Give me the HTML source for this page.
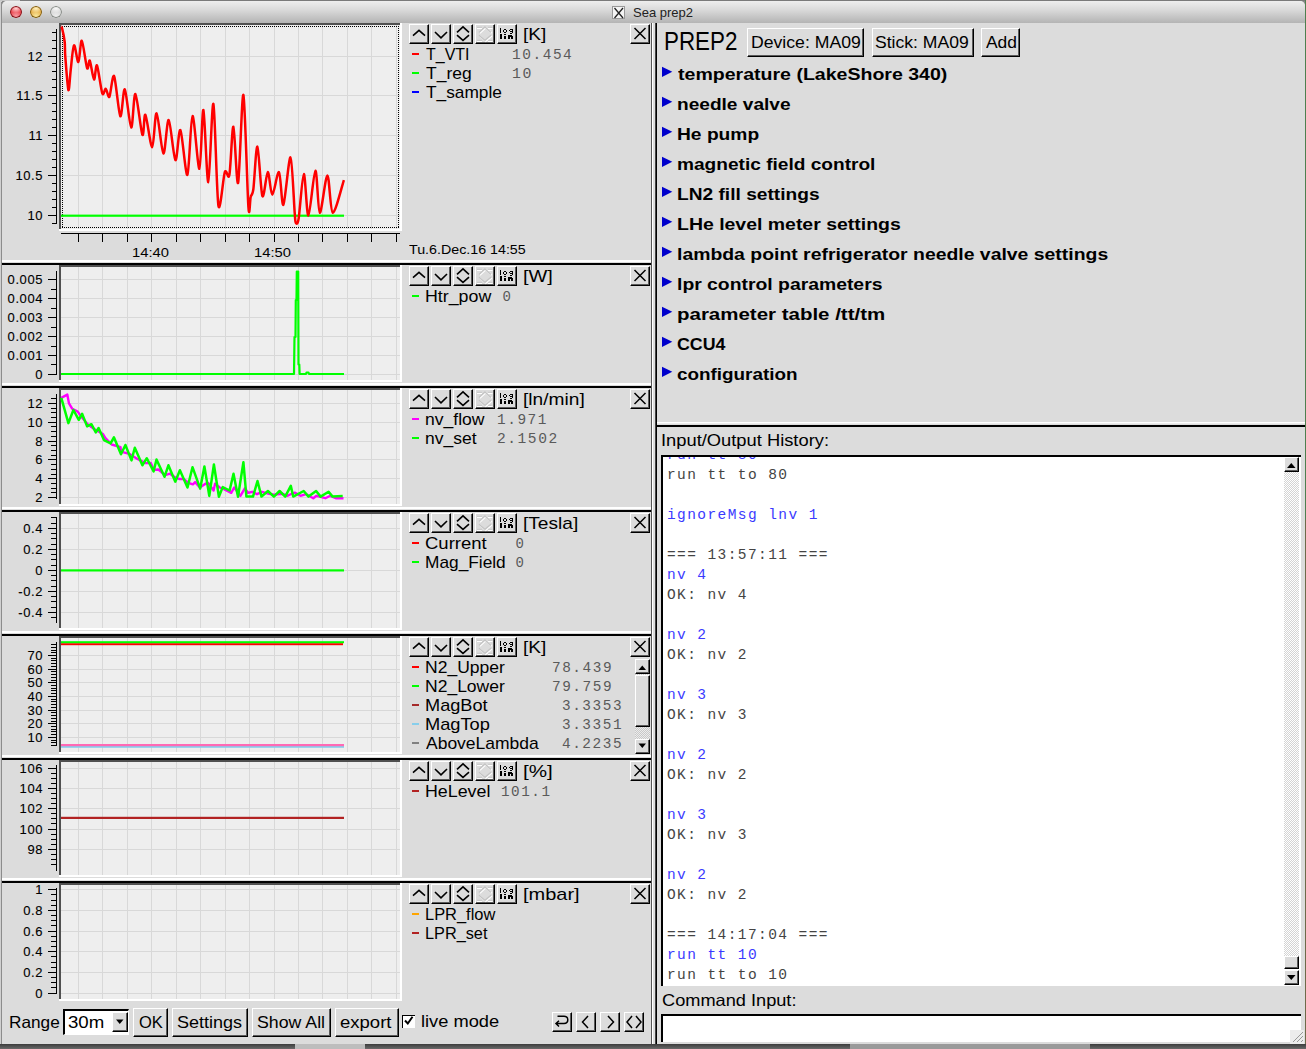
<!DOCTYPE html>
<html><head><meta charset="utf-8"><title>Sea prep2</title>
<style>
html,body{margin:0;padding:0;}
body{width:1306px;height:1049px;position:relative;overflow:hidden;background:#7a7a7a;font-family:"Liberation Sans",sans-serif;}
div{box-sizing:border-box;}
.btn{position:absolute;background:#dcdcdc;border-top:1px solid #fff;border-left:1px solid #fff;border-bottom:1px solid #000;border-right:1px solid #000;box-shadow:inset -1px -1px 0 #5a5a5a;}
svg{position:absolute;left:0;top:0;}
</style></head><body>

<div style="position:absolute;left:0px;top:0px;width:1306px;height:1049px;background:#8a8a8a;"></div>
<div style="position:absolute;left:0px;top:0px;width:1306px;height:1px;background:#7a7a7a;"></div>
<div style="position:absolute;left:0px;top:0px;width:2px;height:1044px;background:#d0d0d0;"></div>
<div style="position:absolute;left:1px;top:2px;width:1px;height:1042px;background:#8c8c8c;"></div>
<div style="position:absolute;left:0px;top:0px;width:20px;height:1px;background:#c8c8c8;"></div>
<div style="position:absolute;left:1305px;top:0px;width:1px;height:520px;background:#4f7f4f;"></div>
<div style="position:absolute;left:1305px;top:520px;width:1px;height:529px;background:#6f6a4a;"></div>
<div style="position:absolute;left:0px;top:1044px;width:1306px;height:5px;background:linear-gradient(#3c3c3c,#6a6a6a);"></div>
<div style="position:absolute;left:295px;top:1044px;width:70px;height:5px;background:#bdbdbd;"></div>
<div style="position:absolute;left:850px;top:1044px;width:240px;height:5px;background:#9a9a9a;"></div>
<div style="position:absolute;left:2px;top:1px;width:1303px;height:1043px;background:#dcdcdc;border-radius:5px 5px 0 0;"></div>
<div style="position:absolute;left:2px;top:23px;width:1303px;height:1021px;background:#dcdcdc;"></div>
<div style="position:absolute;left:2px;top:1px;width:1303px;height:22px;background:linear-gradient(#eeeeee,#dadada 40%,#b4b4b4);border-radius:5px 5px 0 0;"></div>
<div style="position:absolute;left:10.2px;top:5.9px;width:11.8px;height:11.8px;border-radius:50%;background:radial-gradient(ellipse 60% 35% at 50% 22%,#ffd6d6,transparent),radial-gradient(circle at 50% 85%,#f7a0a6,#e8303a 65%);box-shadow:inset 0 0 0 1px #7d1218;"></div>
<div style="position:absolute;left:30.0px;top:5.9px;width:11.8px;height:11.8px;border-radius:50%;background:radial-gradient(ellipse 60% 35% at 50% 22%,#fff2c0,transparent),radial-gradient(circle at 50% 85%,#faeaa0,#e2a43a 65%);box-shadow:inset 0 0 0 1px #7a5a10;"></div>
<div style="position:absolute;left:50.1px;top:5.9px;width:11.8px;height:11.8px;border-radius:50%;background:radial-gradient(ellipse 60% 35% at 50% 22%,#f8f8f8,transparent),radial-gradient(circle at 50% 85%,#eeeeee,#d2d2d2 65%);box-shadow:inset 0 0 0 1px #858a85;"></div>
<div style="position:absolute;left:612px;top:6px;width:13px;height:13px;background:#f4f4f4;border:1px solid #999;"></div>
<svg width="1306" height="30" style="position:absolute;left:0;top:0"><path d="M614.5 8 L623 18 M623 8 L614.5 18" stroke="#222" stroke-width="1.3"/></svg>
<div style="position:absolute;left:633.00px;top:5.50px;font-family:'Liberation Sans',sans-serif;font-size:13px;line-height:13px;color:#222;font-weight:normal;white-space:pre;">Sea prep2</div>
<svg width="1306" height="1049" style="position:absolute;left:0;top:0" shape-rendering="auto"><rect x="59" y="23" width="343" height="208" fill="#fff"/><rect x="59" y="23" width="341" height="206" fill="#505050"/><rect x="61" y="25" width="339" height="204" fill="#eeeeee"/><rect x="78" y="25" width="1" height="204" fill="#d8d8d8"/><rect x="102" y="25" width="1" height="204" fill="#d8d8d8"/><rect x="127" y="25" width="1" height="204" fill="#d8d8d8"/><rect x="151" y="25" width="1" height="204" fill="#d8d8d8"/><rect x="176" y="25" width="1" height="204" fill="#d8d8d8"/><rect x="200" y="25" width="1" height="204" fill="#d8d8d8"/><rect x="225" y="25" width="1" height="204" fill="#d8d8d8"/><rect x="249" y="25" width="1" height="204" fill="#d8d8d8"/><rect x="274" y="25" width="1" height="204" fill="#d8d8d8"/><rect x="298" y="25" width="1" height="204" fill="#d8d8d8"/><rect x="322" y="25" width="1" height="204" fill="#d8d8d8"/><rect x="347" y="25" width="1" height="204" fill="#d8d8d8"/><rect x="371" y="25" width="1" height="204" fill="#d8d8d8"/><rect x="396" y="25" width="1" height="204" fill="#d8d8d8"/><rect x="61" y="215" width="339" height="1" fill="#d8d8d8"/><rect x="61" y="175" width="339" height="1" fill="#d8d8d8"/><rect x="61" y="135" width="339" height="1" fill="#d8d8d8"/><rect x="61" y="95" width="339" height="1" fill="#d8d8d8"/><rect x="61" y="56" width="339" height="1" fill="#d8d8d8"/><rect x="56" y="29" width="1" height="195" fill="#000"/><rect x="52" y="223" width="5" height="1" fill="#000"/><rect x="48" y="215" width="9" height="1" fill="#000"/><rect x="52" y="207" width="5" height="1" fill="#000"/><rect x="52" y="199" width="5" height="1" fill="#000"/><rect x="52" y="191" width="5" height="1" fill="#000"/><rect x="52" y="183" width="5" height="1" fill="#000"/><rect x="48" y="175" width="9" height="1" fill="#000"/><rect x="52" y="167" width="5" height="1" fill="#000"/><rect x="52" y="159" width="5" height="1" fill="#000"/><rect x="52" y="151" width="5" height="1" fill="#000"/><rect x="52" y="143" width="5" height="1" fill="#000"/><rect x="48" y="135" width="9" height="1" fill="#000"/><rect x="52" y="127" width="5" height="1" fill="#000"/><rect x="52" y="119" width="5" height="1" fill="#000"/><rect x="52" y="111" width="5" height="1" fill="#000"/><rect x="52" y="103" width="5" height="1" fill="#000"/><rect x="48" y="95" width="9" height="1" fill="#000"/><rect x="52" y="87" width="5" height="1" fill="#000"/><rect x="52" y="79" width="5" height="1" fill="#000"/><rect x="52" y="71" width="5" height="1" fill="#000"/><rect x="52" y="63" width="5" height="1" fill="#000"/><rect x="48" y="56" width="9" height="1" fill="#000"/><rect x="52" y="48" width="5" height="1" fill="#000"/><rect x="52" y="40" width="5" height="1" fill="#000"/><rect x="52" y="32" width="5" height="1" fill="#000"/><rect x="59" y="265" width="343" height="117" fill="#fff"/><rect x="59" y="265" width="341" height="115" fill="#505050"/><rect x="61" y="267" width="339" height="113" fill="#eeeeee"/><rect x="78" y="267" width="1" height="113" fill="#d8d8d8"/><rect x="102" y="267" width="1" height="113" fill="#d8d8d8"/><rect x="127" y="267" width="1" height="113" fill="#d8d8d8"/><rect x="151" y="267" width="1" height="113" fill="#d8d8d8"/><rect x="176" y="267" width="1" height="113" fill="#d8d8d8"/><rect x="200" y="267" width="1" height="113" fill="#d8d8d8"/><rect x="225" y="267" width="1" height="113" fill="#d8d8d8"/><rect x="249" y="267" width="1" height="113" fill="#d8d8d8"/><rect x="274" y="267" width="1" height="113" fill="#d8d8d8"/><rect x="298" y="267" width="1" height="113" fill="#d8d8d8"/><rect x="322" y="267" width="1" height="113" fill="#d8d8d8"/><rect x="347" y="267" width="1" height="113" fill="#d8d8d8"/><rect x="371" y="267" width="1" height="113" fill="#d8d8d8"/><rect x="396" y="267" width="1" height="113" fill="#d8d8d8"/><rect x="61" y="374" width="339" height="1" fill="#d8d8d8"/><rect x="61" y="355" width="339" height="1" fill="#d8d8d8"/><rect x="61" y="336" width="339" height="1" fill="#d8d8d8"/><rect x="61" y="317" width="339" height="1" fill="#d8d8d8"/><rect x="61" y="298" width="339" height="1" fill="#d8d8d8"/><rect x="61" y="279" width="339" height="1" fill="#d8d8d8"/><rect x="56" y="271" width="1" height="104" fill="#000"/><rect x="48" y="374" width="9" height="1" fill="#000"/><rect x="51" y="364" width="6" height="1" fill="#000"/><rect x="48" y="355" width="9" height="1" fill="#000"/><rect x="51" y="346" width="6" height="1" fill="#000"/><rect x="48" y="336" width="9" height="1" fill="#000"/><rect x="51" y="327" width="6" height="1" fill="#000"/><rect x="48" y="317" width="9" height="1" fill="#000"/><rect x="51" y="308" width="6" height="1" fill="#000"/><rect x="48" y="298" width="9" height="1" fill="#000"/><rect x="51" y="289" width="6" height="1" fill="#000"/><rect x="48" y="279" width="9" height="1" fill="#000"/><rect x="59" y="388" width="343" height="118" fill="#fff"/><rect x="59" y="388" width="341" height="116" fill="#505050"/><rect x="61" y="390" width="339" height="114" fill="#eeeeee"/><rect x="78" y="390" width="1" height="114" fill="#d8d8d8"/><rect x="102" y="390" width="1" height="114" fill="#d8d8d8"/><rect x="127" y="390" width="1" height="114" fill="#d8d8d8"/><rect x="151" y="390" width="1" height="114" fill="#d8d8d8"/><rect x="176" y="390" width="1" height="114" fill="#d8d8d8"/><rect x="200" y="390" width="1" height="114" fill="#d8d8d8"/><rect x="225" y="390" width="1" height="114" fill="#d8d8d8"/><rect x="249" y="390" width="1" height="114" fill="#d8d8d8"/><rect x="274" y="390" width="1" height="114" fill="#d8d8d8"/><rect x="298" y="390" width="1" height="114" fill="#d8d8d8"/><rect x="322" y="390" width="1" height="114" fill="#d8d8d8"/><rect x="347" y="390" width="1" height="114" fill="#d8d8d8"/><rect x="371" y="390" width="1" height="114" fill="#d8d8d8"/><rect x="396" y="390" width="1" height="114" fill="#d8d8d8"/><rect x="61" y="497" width="339" height="1" fill="#d8d8d8"/><rect x="61" y="478" width="339" height="1" fill="#d8d8d8"/><rect x="61" y="459" width="339" height="1" fill="#d8d8d8"/><rect x="61" y="441" width="339" height="1" fill="#d8d8d8"/><rect x="61" y="422" width="339" height="1" fill="#d8d8d8"/><rect x="61" y="403" width="339" height="1" fill="#d8d8d8"/><rect x="56" y="394" width="1" height="105" fill="#000"/><rect x="48" y="497" width="9" height="1" fill="#000"/><rect x="51" y="492" width="6" height="1" fill="#000"/><rect x="51" y="488" width="6" height="1" fill="#000"/><rect x="51" y="483" width="6" height="1" fill="#000"/><rect x="48" y="478" width="9" height="1" fill="#000"/><rect x="51" y="474" width="6" height="1" fill="#000"/><rect x="51" y="469" width="6" height="1" fill="#000"/><rect x="51" y="464" width="6" height="1" fill="#000"/><rect x="48" y="459" width="9" height="1" fill="#000"/><rect x="51" y="455" width="6" height="1" fill="#000"/><rect x="51" y="450" width="6" height="1" fill="#000"/><rect x="51" y="445" width="6" height="1" fill="#000"/><rect x="48" y="441" width="9" height="1" fill="#000"/><rect x="51" y="436" width="6" height="1" fill="#000"/><rect x="51" y="431" width="6" height="1" fill="#000"/><rect x="51" y="426" width="6" height="1" fill="#000"/><rect x="48" y="422" width="9" height="1" fill="#000"/><rect x="51" y="417" width="6" height="1" fill="#000"/><rect x="51" y="412" width="6" height="1" fill="#000"/><rect x="51" y="408" width="6" height="1" fill="#000"/><rect x="48" y="403" width="9" height="1" fill="#000"/><rect x="51" y="398" width="6" height="1" fill="#000"/><rect x="59" y="512" width="343" height="118" fill="#fff"/><rect x="59" y="512" width="341" height="116" fill="#505050"/><rect x="61" y="514" width="339" height="114" fill="#eeeeee"/><rect x="78" y="514" width="1" height="114" fill="#d8d8d8"/><rect x="102" y="514" width="1" height="114" fill="#d8d8d8"/><rect x="127" y="514" width="1" height="114" fill="#d8d8d8"/><rect x="151" y="514" width="1" height="114" fill="#d8d8d8"/><rect x="176" y="514" width="1" height="114" fill="#d8d8d8"/><rect x="200" y="514" width="1" height="114" fill="#d8d8d8"/><rect x="225" y="514" width="1" height="114" fill="#d8d8d8"/><rect x="249" y="514" width="1" height="114" fill="#d8d8d8"/><rect x="274" y="514" width="1" height="114" fill="#d8d8d8"/><rect x="298" y="514" width="1" height="114" fill="#d8d8d8"/><rect x="322" y="514" width="1" height="114" fill="#d8d8d8"/><rect x="347" y="514" width="1" height="114" fill="#d8d8d8"/><rect x="371" y="514" width="1" height="114" fill="#d8d8d8"/><rect x="396" y="514" width="1" height="114" fill="#d8d8d8"/><rect x="61" y="612" width="339" height="1" fill="#d8d8d8"/><rect x="61" y="591" width="339" height="1" fill="#d8d8d8"/><rect x="61" y="570" width="339" height="1" fill="#d8d8d8"/><rect x="61" y="549" width="339" height="1" fill="#d8d8d8"/><rect x="61" y="528" width="339" height="1" fill="#d8d8d8"/><rect x="56" y="518" width="1" height="105" fill="#000"/><rect x="51" y="617" width="6" height="1" fill="#000"/><rect x="48" y="612" width="9" height="1" fill="#000"/><rect x="51" y="607" width="6" height="1" fill="#000"/><rect x="51" y="601" width="6" height="1" fill="#000"/><rect x="51" y="596" width="6" height="1" fill="#000"/><rect x="48" y="591" width="9" height="1" fill="#000"/><rect x="51" y="586" width="6" height="1" fill="#000"/><rect x="51" y="580" width="6" height="1" fill="#000"/><rect x="51" y="575" width="6" height="1" fill="#000"/><rect x="48" y="570" width="9" height="1" fill="#000"/><rect x="51" y="565" width="6" height="1" fill="#000"/><rect x="51" y="559" width="6" height="1" fill="#000"/><rect x="51" y="554" width="6" height="1" fill="#000"/><rect x="48" y="549" width="9" height="1" fill="#000"/><rect x="51" y="544" width="6" height="1" fill="#000"/><rect x="51" y="538" width="6" height="1" fill="#000"/><rect x="51" y="533" width="6" height="1" fill="#000"/><rect x="48" y="528" width="9" height="1" fill="#000"/><rect x="51" y="523" width="6" height="1" fill="#000"/><rect x="51" y="517" width="6" height="1" fill="#000"/><rect x="59" y="636" width="343" height="118" fill="#fff"/><rect x="59" y="636" width="341" height="116" fill="#505050"/><rect x="61" y="638" width="339" height="114" fill="#eeeeee"/><rect x="78" y="638" width="1" height="114" fill="#d8d8d8"/><rect x="102" y="638" width="1" height="114" fill="#d8d8d8"/><rect x="127" y="638" width="1" height="114" fill="#d8d8d8"/><rect x="151" y="638" width="1" height="114" fill="#d8d8d8"/><rect x="176" y="638" width="1" height="114" fill="#d8d8d8"/><rect x="200" y="638" width="1" height="114" fill="#d8d8d8"/><rect x="225" y="638" width="1" height="114" fill="#d8d8d8"/><rect x="249" y="638" width="1" height="114" fill="#d8d8d8"/><rect x="274" y="638" width="1" height="114" fill="#d8d8d8"/><rect x="298" y="638" width="1" height="114" fill="#d8d8d8"/><rect x="322" y="638" width="1" height="114" fill="#d8d8d8"/><rect x="347" y="638" width="1" height="114" fill="#d8d8d8"/><rect x="371" y="638" width="1" height="114" fill="#d8d8d8"/><rect x="396" y="638" width="1" height="114" fill="#d8d8d8"/><rect x="61" y="737" width="339" height="1" fill="#d8d8d8"/><rect x="61" y="723" width="339" height="1" fill="#d8d8d8"/><rect x="61" y="710" width="339" height="1" fill="#d8d8d8"/><rect x="61" y="696" width="339" height="1" fill="#d8d8d8"/><rect x="61" y="682" width="339" height="1" fill="#d8d8d8"/><rect x="61" y="669" width="339" height="1" fill="#d8d8d8"/><rect x="61" y="655" width="339" height="1" fill="#d8d8d8"/><rect x="56" y="642" width="1" height="104" fill="#000"/><rect x="51" y="745" width="6" height="1" fill="#000"/><rect x="51" y="742" width="6" height="1" fill="#000"/><rect x="51" y="740" width="6" height="1" fill="#000"/><rect x="48" y="737" width="9" height="1" fill="#000"/><rect x="51" y="734" width="6" height="1" fill="#000"/><rect x="51" y="731" width="6" height="1" fill="#000"/><rect x="51" y="729" width="6" height="1" fill="#000"/><rect x="51" y="726" width="6" height="1" fill="#000"/><rect x="48" y="723" width="9" height="1" fill="#000"/><rect x="51" y="721" width="6" height="1" fill="#000"/><rect x="51" y="718" width="6" height="1" fill="#000"/><rect x="51" y="715" width="6" height="1" fill="#000"/><rect x="51" y="712" width="6" height="1" fill="#000"/><rect x="48" y="710" width="9" height="1" fill="#000"/><rect x="51" y="707" width="6" height="1" fill="#000"/><rect x="51" y="704" width="6" height="1" fill="#000"/><rect x="51" y="701" width="6" height="1" fill="#000"/><rect x="51" y="699" width="6" height="1" fill="#000"/><rect x="48" y="696" width="9" height="1" fill="#000"/><rect x="51" y="693" width="6" height="1" fill="#000"/><rect x="51" y="690" width="6" height="1" fill="#000"/><rect x="51" y="688" width="6" height="1" fill="#000"/><rect x="51" y="685" width="6" height="1" fill="#000"/><rect x="48" y="682" width="9" height="1" fill="#000"/><rect x="51" y="680" width="6" height="1" fill="#000"/><rect x="51" y="677" width="6" height="1" fill="#000"/><rect x="51" y="674" width="6" height="1" fill="#000"/><rect x="51" y="671" width="6" height="1" fill="#000"/><rect x="48" y="669" width="9" height="1" fill="#000"/><rect x="51" y="666" width="6" height="1" fill="#000"/><rect x="51" y="663" width="6" height="1" fill="#000"/><rect x="51" y="660" width="6" height="1" fill="#000"/><rect x="51" y="658" width="6" height="1" fill="#000"/><rect x="48" y="655" width="9" height="1" fill="#000"/><rect x="51" y="652" width="6" height="1" fill="#000"/><rect x="51" y="650" width="6" height="1" fill="#000"/><rect x="51" y="647" width="6" height="1" fill="#000"/><rect x="51" y="644" width="6" height="1" fill="#000"/><rect x="59" y="760" width="343" height="117" fill="#fff"/><rect x="59" y="760" width="341" height="115" fill="#505050"/><rect x="61" y="762" width="339" height="113" fill="#eeeeee"/><rect x="78" y="762" width="1" height="113" fill="#d8d8d8"/><rect x="102" y="762" width="1" height="113" fill="#d8d8d8"/><rect x="127" y="762" width="1" height="113" fill="#d8d8d8"/><rect x="151" y="762" width="1" height="113" fill="#d8d8d8"/><rect x="176" y="762" width="1" height="113" fill="#d8d8d8"/><rect x="200" y="762" width="1" height="113" fill="#d8d8d8"/><rect x="225" y="762" width="1" height="113" fill="#d8d8d8"/><rect x="249" y="762" width="1" height="113" fill="#d8d8d8"/><rect x="274" y="762" width="1" height="113" fill="#d8d8d8"/><rect x="298" y="762" width="1" height="113" fill="#d8d8d8"/><rect x="322" y="762" width="1" height="113" fill="#d8d8d8"/><rect x="347" y="762" width="1" height="113" fill="#d8d8d8"/><rect x="371" y="762" width="1" height="113" fill="#d8d8d8"/><rect x="396" y="762" width="1" height="113" fill="#d8d8d8"/><rect x="61" y="849" width="339" height="1" fill="#d8d8d8"/><rect x="61" y="829" width="339" height="1" fill="#d8d8d8"/><rect x="61" y="808" width="339" height="1" fill="#d8d8d8"/><rect x="61" y="788" width="339" height="1" fill="#d8d8d8"/><rect x="61" y="768" width="339" height="1" fill="#d8d8d8"/><rect x="56" y="765" width="1" height="106" fill="#000"/><rect x="51" y="864" width="6" height="1" fill="#000"/><rect x="51" y="859" width="6" height="1" fill="#000"/><rect x="51" y="854" width="6" height="1" fill="#000"/><rect x="48" y="849" width="9" height="1" fill="#000"/><rect x="51" y="844" width="6" height="1" fill="#000"/><rect x="51" y="839" width="6" height="1" fill="#000"/><rect x="51" y="834" width="6" height="1" fill="#000"/><rect x="48" y="829" width="9" height="1" fill="#000"/><rect x="51" y="823" width="6" height="1" fill="#000"/><rect x="51" y="818" width="6" height="1" fill="#000"/><rect x="51" y="813" width="6" height="1" fill="#000"/><rect x="48" y="808" width="9" height="1" fill="#000"/><rect x="51" y="803" width="6" height="1" fill="#000"/><rect x="51" y="798" width="6" height="1" fill="#000"/><rect x="51" y="793" width="6" height="1" fill="#000"/><rect x="48" y="788" width="9" height="1" fill="#000"/><rect x="51" y="783" width="6" height="1" fill="#000"/><rect x="51" y="778" width="6" height="1" fill="#000"/><rect x="51" y="773" width="6" height="1" fill="#000"/><rect x="48" y="768" width="9" height="1" fill="#000"/><rect x="59" y="883" width="343" height="118" fill="#fff"/><rect x="59" y="883" width="341" height="116" fill="#505050"/><rect x="61" y="885" width="339" height="114" fill="#eeeeee"/><rect x="78" y="885" width="1" height="114" fill="#d8d8d8"/><rect x="102" y="885" width="1" height="114" fill="#d8d8d8"/><rect x="127" y="885" width="1" height="114" fill="#d8d8d8"/><rect x="151" y="885" width="1" height="114" fill="#d8d8d8"/><rect x="176" y="885" width="1" height="114" fill="#d8d8d8"/><rect x="200" y="885" width="1" height="114" fill="#d8d8d8"/><rect x="225" y="885" width="1" height="114" fill="#d8d8d8"/><rect x="249" y="885" width="1" height="114" fill="#d8d8d8"/><rect x="274" y="885" width="1" height="114" fill="#d8d8d8"/><rect x="298" y="885" width="1" height="114" fill="#d8d8d8"/><rect x="322" y="885" width="1" height="114" fill="#d8d8d8"/><rect x="347" y="885" width="1" height="114" fill="#d8d8d8"/><rect x="371" y="885" width="1" height="114" fill="#d8d8d8"/><rect x="396" y="885" width="1" height="114" fill="#d8d8d8"/><rect x="61" y="993" width="339" height="1" fill="#d8d8d8"/><rect x="61" y="972" width="339" height="1" fill="#d8d8d8"/><rect x="61" y="951" width="339" height="1" fill="#d8d8d8"/><rect x="61" y="931" width="339" height="1" fill="#d8d8d8"/><rect x="61" y="910" width="339" height="1" fill="#d8d8d8"/><rect x="61" y="889" width="339" height="1" fill="#d8d8d8"/><rect x="56" y="888" width="1" height="106" fill="#000"/><rect x="48" y="993" width="9" height="1" fill="#000"/><rect x="51" y="987" width="6" height="1" fill="#000"/><rect x="51" y="982" width="6" height="1" fill="#000"/><rect x="51" y="977" width="6" height="1" fill="#000"/><rect x="48" y="972" width="9" height="1" fill="#000"/><rect x="51" y="967" width="6" height="1" fill="#000"/><rect x="51" y="962" width="6" height="1" fill="#000"/><rect x="51" y="956" width="6" height="1" fill="#000"/><rect x="48" y="951" width="9" height="1" fill="#000"/><rect x="51" y="946" width="6" height="1" fill="#000"/><rect x="51" y="941" width="6" height="1" fill="#000"/><rect x="51" y="936" width="6" height="1" fill="#000"/><rect x="48" y="931" width="9" height="1" fill="#000"/><rect x="51" y="925" width="6" height="1" fill="#000"/><rect x="51" y="920" width="6" height="1" fill="#000"/><rect x="51" y="915" width="6" height="1" fill="#000"/><rect x="48" y="910" width="9" height="1" fill="#000"/><rect x="51" y="905" width="6" height="1" fill="#000"/><rect x="51" y="900" width="6" height="1" fill="#000"/><rect x="51" y="894" width="6" height="1" fill="#000"/><rect x="48" y="889" width="9" height="1" fill="#000"/><path d="M62 26.5 H399 M62 227.5 H399 M62.5 26 V228 M398.5 26 V228" fill="none" stroke="#000" stroke-width="1" stroke-dasharray="1,1" shape-rendering="crispEdges"/><rect x="61" y="233" width="339" height="1" fill="#000"/><rect x="78" y="233" width="1" height="9" fill="#000"/><rect x="102" y="233" width="1" height="9" fill="#000"/><rect x="127" y="233" width="1" height="9" fill="#000"/><rect x="151" y="233" width="1" height="9" fill="#000"/><rect x="176" y="233" width="1" height="9" fill="#000"/><rect x="200" y="233" width="1" height="9" fill="#000"/><rect x="225" y="233" width="1" height="9" fill="#000"/><rect x="249" y="233" width="1" height="9" fill="#000"/><rect x="274" y="233" width="1" height="9" fill="#000"/><rect x="298" y="233" width="1" height="9" fill="#000"/><rect x="322" y="233" width="1" height="9" fill="#000"/><rect x="347" y="233" width="1" height="9" fill="#000"/><rect x="371" y="233" width="1" height="9" fill="#000"/><rect x="396" y="233" width="1" height="9" fill="#000"/><rect x="61" y="214.60" width="283" height="2.2" fill="#00ff00"/><path d="M61.0,27.0 C61.1,27.1 61.4,25.8 62.0,28.0 C62.6,30.2 64.2,37.7 64.7,42.0 C65.2,46.3 64.7,49.5 65.3,56.7 C65.9,63.9 67.6,88.0 68.4,90.0 C69.2,92.0 69.9,76.7 70.7,70.0 C71.5,63.3 72.8,46.6 74.0,45.4 C75.2,44.2 77.2,62.7 78.4,62.0 C79.6,61.3 80.5,39.8 81.8,40.7 C83.1,41.6 85.9,65.1 87.1,68.1 C88.3,71.1 88.8,59.0 89.8,60.7 C90.8,62.4 92.9,78.7 94.0,79.4 C95.1,80.1 95.8,63.3 97.0,65.4 C98.2,67.5 101.0,89.9 102.3,93.4 C103.6,96.9 104.7,88.3 105.8,88.8 C106.9,89.3 108.2,98.7 109.4,96.8 C110.6,94.9 112.5,73.2 114.1,76.1 C115.7,79.0 118.7,114.1 120.3,116.1 C121.9,118.1 123.2,87.7 124.8,89.4 C126.4,91.1 129.6,126.8 131.2,127.5 C132.8,128.2 133.7,93.0 135.4,94.1 C137.1,95.2 140.9,131.7 142.4,134.8 C143.9,137.9 143.9,112.9 145.4,114.8 C146.9,116.7 150.5,147.4 152.2,147.2 C153.9,147.0 154.9,112.5 156.6,113.4 C158.3,114.3 161.6,152.4 163.4,153.4 C165.2,154.4 166.9,119.0 168.7,120.0 C170.5,121.0 173.6,158.6 175.4,160.1 C177.2,161.6 178.6,127.8 180.4,130.0 C182.2,132.2 185.6,176.9 187.4,174.8 C189.2,172.7 190.7,116.9 192.5,116.0 C194.3,115.1 197.8,169.7 199.4,168.8 C201.0,167.9 202.1,108.0 203.4,110.0 C204.7,112.0 206.8,183.0 208.3,182.1 C209.8,181.2 211.9,100.5 213.4,104.0 C214.9,107.5 216.7,195.3 218.4,205.5 C220.1,215.7 223.2,176.7 224.8,172.1 C226.5,167.5 228.1,181.6 229.4,174.8 C230.7,168.0 232.1,125.5 233.4,126.7 C234.7,127.9 236.6,187.6 238.1,182.8 C239.6,178.0 241.9,91.4 243.4,95.0 C244.9,98.6 247.3,191.5 248.4,206.8 C249.5,222.1 249.9,199.5 250.7,196.8 C251.4,194.1 252.4,196.3 253.4,188.8 C254.4,181.3 256.0,145.6 257.4,146.7 C258.8,147.8 260.8,192.3 262.4,196.1 C264.0,199.9 266.3,172.3 267.8,172.1 C269.3,171.9 270.6,194.8 272.3,194.8 C274.0,194.8 277.3,170.6 279.0,172.1 C280.7,173.6 281.7,207.0 283.4,204.8 C285.1,202.6 288.8,156.2 290.5,157.4 C292.2,158.6 293.9,203.0 294.7,212.8 C295.5,222.6 295.2,222.0 295.8,222.8 C296.4,223.6 297.5,225.5 298.7,218.2 C299.9,210.9 302.3,174.5 303.8,174.1 C305.3,173.7 306.7,216.0 308.4,215.5 C310.1,215.0 313.7,171.2 315.4,170.8 C317.1,170.4 318.0,212.1 319.8,212.8 C321.6,213.5 325.4,175.4 327.4,175.4 C329.3,175.4 330.3,212.1 332.8,212.8 C335.3,213.5 342.2,185.0 343.9,180.1" fill="none" stroke="#ff0000" stroke-width="2.5" stroke-linejoin="round"/><polyline points="61.0,374.0 294.0,374.0 294.5,337.0 295.5,337.0 295.8,300.0 296.5,300.0 296.8,271.5 298.2,271.5 298.5,364.5 299.3,364.5 299.6,374.0 306.0,374.0 306.5,372.5 308.5,372.5 309.0,374.0 344.0,374.0" fill="none" stroke="#00ff00" stroke-width="2.2" stroke-linejoin="round" stroke-linecap="butt"/><polyline points="61.3,397.9 67.3,394.6 69.0,403.4 72.3,408.8 77.7,411.6 81.6,417.0 87.6,424.2 95.3,429.7 103.0,434.0 105.2,437.9 111.7,444.5 120.5,447.2 121.0,451.6 129.3,453.8 137.0,458.7 145.7,463.1 150.8,463.0 153.8,469.9 158.4,469.5 165.3,475.2 169.9,473.7 175.3,477.5 179.1,479.0 183.7,479.0 188.3,482.9 192.9,484.4 195.2,482.1 199.8,487.5 205.1,484.0 208.2,482.9 213.6,490.5 215.1,483.6 219.7,487.5 223.5,489.0 231.2,492.8 234.2,487.5 240.4,495.9 245.0,488.2 248.0,492.8 252.2,491.8 257.0,494.2 261.9,491.8 269.1,493.8 273.9,494.6 282.8,493.8 287.6,495.8 291.6,493.8 294.8,492.6 300.5,495.8 306.1,494.2 313.3,498.2 316.5,495.8 325.4,498.2 330.2,495.8 335.8,498.2 343.5,498.2" fill="none" stroke="#ff00ff" stroke-width="2.4" stroke-linejoin="round" stroke-linecap="butt"/><polyline points="61.3,397.9 68.4,423.1 73.4,410.0 78.8,419.8 82.1,413.8 87.1,426.4 91.4,424.2 95.8,432.4 98.6,428.0 104.0,440.1 110.6,443.4 113.9,437.3 121.0,454.3 125.4,445.0 131.5,460.4 134.8,447.8 142.4,465.3 146.8,458.2 153.6,471.4 156.5,459.5 164.5,476.8 168.4,465.3 175.3,481.7 179.9,470.2 187.5,487.5 192.5,467.2 200.2,488.6 204.4,466.4 209.3,495.9 213.9,464.5 218.9,496.7 222.7,487.1 229.6,490.5 233.5,473.7 238.0,496.7 243.4,462.2 246.4,496.6 253.0,496.6 257.5,481.0 261.5,496.6 267.9,491.0 273.9,496.6 279.6,491.0 285.2,496.6 290.8,485.8 293.2,496.6 303.7,491.0 308.5,496.6 316.1,491.0 320.6,496.6 328.6,491.8 332.6,496.6 342.7,496.0" fill="none" stroke="#00ff00" stroke-width="2.5" stroke-linejoin="round" stroke-linecap="butt"/><rect x="61" y="569.30" width="283" height="2.2" fill="#00ff00"/><rect x="61" y="744.28" width="283" height="2" fill="#808080"/><rect x="61" y="746" width="283" height="1.8" fill="#87ceeb"/><rect x="61" y="744" width="283" height="2.2" fill="#ff69b4"/><rect x="61" y="643.2" width="282" height="2" fill="#ff0000"/><rect x="61" y="641.2" width="283" height="2" fill="#00ff00"/><rect x="61" y="816.79" width="283" height="2.2" fill="#b22222"/><rect x="2" y="260" width="649" height="2" fill="#fff"/><rect x="2" y="263" width="649" height="2" fill="#000"/><rect x="2" y="383" width="649" height="2" fill="#fff"/><rect x="2" y="386" width="649" height="2" fill="#000"/><rect x="2" y="507" width="649" height="2" fill="#fff"/><rect x="2" y="510" width="649" height="2" fill="#000"/><rect x="2" y="631" width="649" height="2" fill="#fff"/><rect x="2" y="634" width="649" height="2" fill="#000"/><rect x="2" y="755" width="649" height="2" fill="#fff"/><rect x="2" y="758" width="649" height="2" fill="#000"/><rect x="2" y="878" width="649" height="2" fill="#fff"/><rect x="2" y="881" width="649" height="2" fill="#000"/></svg>
<div style="position:absolute;left:0;width:43.1px;top:208.90px;text-align:right;font-size:13px;line-height:14px;letter-spacing:0.6px;-webkit-text-stroke:0.12px #000;white-space:pre;color:#000">10</div>
<div style="position:absolute;left:0;width:43.1px;top:168.90px;text-align:right;font-size:13px;line-height:14px;letter-spacing:0.6px;-webkit-text-stroke:0.12px #000;white-space:pre;color:#000">10.5</div>
<div style="position:absolute;left:0;width:43.1px;top:128.90px;text-align:right;font-size:13px;line-height:14px;letter-spacing:0.6px;-webkit-text-stroke:0.12px #000;white-space:pre;color:#000">11</div>
<div style="position:absolute;left:0;width:43.1px;top:88.90px;text-align:right;font-size:13px;line-height:14px;letter-spacing:0.6px;-webkit-text-stroke:0.12px #000;white-space:pre;color:#000">11.5</div>
<div style="position:absolute;left:0;width:43.1px;top:49.90px;text-align:right;font-size:13px;line-height:14px;letter-spacing:0.6px;-webkit-text-stroke:0.12px #000;white-space:pre;color:#000">12</div>
<div style="position:absolute;left:0;width:43.1px;top:367.90px;text-align:right;font-size:13px;line-height:14px;letter-spacing:0.6px;-webkit-text-stroke:0.12px #000;white-space:pre;color:#000">0</div>
<div style="position:absolute;left:0;width:43.1px;top:348.90px;text-align:right;font-size:13px;line-height:14px;letter-spacing:0.6px;-webkit-text-stroke:0.12px #000;white-space:pre;color:#000">0.001</div>
<div style="position:absolute;left:0;width:43.1px;top:329.90px;text-align:right;font-size:13px;line-height:14px;letter-spacing:0.6px;-webkit-text-stroke:0.12px #000;white-space:pre;color:#000">0.002</div>
<div style="position:absolute;left:0;width:43.1px;top:310.90px;text-align:right;font-size:13px;line-height:14px;letter-spacing:0.6px;-webkit-text-stroke:0.12px #000;white-space:pre;color:#000">0.003</div>
<div style="position:absolute;left:0;width:43.1px;top:291.90px;text-align:right;font-size:13px;line-height:14px;letter-spacing:0.6px;-webkit-text-stroke:0.12px #000;white-space:pre;color:#000">0.004</div>
<div style="position:absolute;left:0;width:43.1px;top:272.90px;text-align:right;font-size:13px;line-height:14px;letter-spacing:0.6px;-webkit-text-stroke:0.12px #000;white-space:pre;color:#000">0.005</div>
<div style="position:absolute;left:0;width:43.1px;top:490.90px;text-align:right;font-size:13px;line-height:14px;letter-spacing:0.6px;-webkit-text-stroke:0.12px #000;white-space:pre;color:#000">2</div>
<div style="position:absolute;left:0;width:43.1px;top:471.90px;text-align:right;font-size:13px;line-height:14px;letter-spacing:0.6px;-webkit-text-stroke:0.12px #000;white-space:pre;color:#000">4</div>
<div style="position:absolute;left:0;width:43.1px;top:452.90px;text-align:right;font-size:13px;line-height:14px;letter-spacing:0.6px;-webkit-text-stroke:0.12px #000;white-space:pre;color:#000">6</div>
<div style="position:absolute;left:0;width:43.1px;top:434.90px;text-align:right;font-size:13px;line-height:14px;letter-spacing:0.6px;-webkit-text-stroke:0.12px #000;white-space:pre;color:#000">8</div>
<div style="position:absolute;left:0;width:43.1px;top:415.90px;text-align:right;font-size:13px;line-height:14px;letter-spacing:0.6px;-webkit-text-stroke:0.12px #000;white-space:pre;color:#000">10</div>
<div style="position:absolute;left:0;width:43.1px;top:396.90px;text-align:right;font-size:13px;line-height:14px;letter-spacing:0.6px;-webkit-text-stroke:0.12px #000;white-space:pre;color:#000">12</div>
<div style="position:absolute;left:0;width:43.1px;top:605.90px;text-align:right;font-size:13px;line-height:14px;letter-spacing:0.6px;-webkit-text-stroke:0.12px #000;white-space:pre;color:#000">-0.4</div>
<div style="position:absolute;left:0;width:43.1px;top:584.90px;text-align:right;font-size:13px;line-height:14px;letter-spacing:0.6px;-webkit-text-stroke:0.12px #000;white-space:pre;color:#000">-0.2</div>
<div style="position:absolute;left:0;width:43.1px;top:563.90px;text-align:right;font-size:13px;line-height:14px;letter-spacing:0.6px;-webkit-text-stroke:0.12px #000;white-space:pre;color:#000">0</div>
<div style="position:absolute;left:0;width:43.1px;top:542.90px;text-align:right;font-size:13px;line-height:14px;letter-spacing:0.6px;-webkit-text-stroke:0.12px #000;white-space:pre;color:#000">0.2</div>
<div style="position:absolute;left:0;width:43.1px;top:521.90px;text-align:right;font-size:13px;line-height:14px;letter-spacing:0.6px;-webkit-text-stroke:0.12px #000;white-space:pre;color:#000">0.4</div>
<div style="position:absolute;left:0;width:43.1px;top:730.90px;text-align:right;font-size:13px;line-height:14px;letter-spacing:0.6px;-webkit-text-stroke:0.12px #000;white-space:pre;color:#000">10</div>
<div style="position:absolute;left:0;width:43.1px;top:716.90px;text-align:right;font-size:13px;line-height:14px;letter-spacing:0.6px;-webkit-text-stroke:0.12px #000;white-space:pre;color:#000">20</div>
<div style="position:absolute;left:0;width:43.1px;top:703.90px;text-align:right;font-size:13px;line-height:14px;letter-spacing:0.6px;-webkit-text-stroke:0.12px #000;white-space:pre;color:#000">30</div>
<div style="position:absolute;left:0;width:43.1px;top:689.90px;text-align:right;font-size:13px;line-height:14px;letter-spacing:0.6px;-webkit-text-stroke:0.12px #000;white-space:pre;color:#000">40</div>
<div style="position:absolute;left:0;width:43.1px;top:675.90px;text-align:right;font-size:13px;line-height:14px;letter-spacing:0.6px;-webkit-text-stroke:0.12px #000;white-space:pre;color:#000">50</div>
<div style="position:absolute;left:0;width:43.1px;top:662.90px;text-align:right;font-size:13px;line-height:14px;letter-spacing:0.6px;-webkit-text-stroke:0.12px #000;white-space:pre;color:#000">60</div>
<div style="position:absolute;left:0;width:43.1px;top:648.90px;text-align:right;font-size:13px;line-height:14px;letter-spacing:0.6px;-webkit-text-stroke:0.12px #000;white-space:pre;color:#000">70</div>
<div style="position:absolute;left:0;width:43.1px;top:842.90px;text-align:right;font-size:13px;line-height:14px;letter-spacing:0.6px;-webkit-text-stroke:0.12px #000;white-space:pre;color:#000">98</div>
<div style="position:absolute;left:0;width:43.1px;top:822.90px;text-align:right;font-size:13px;line-height:14px;letter-spacing:0.6px;-webkit-text-stroke:0.12px #000;white-space:pre;color:#000">100</div>
<div style="position:absolute;left:0;width:43.1px;top:801.90px;text-align:right;font-size:13px;line-height:14px;letter-spacing:0.6px;-webkit-text-stroke:0.12px #000;white-space:pre;color:#000">102</div>
<div style="position:absolute;left:0;width:43.1px;top:781.90px;text-align:right;font-size:13px;line-height:14px;letter-spacing:0.6px;-webkit-text-stroke:0.12px #000;white-space:pre;color:#000">104</div>
<div style="position:absolute;left:0;width:43.1px;top:761.90px;text-align:right;font-size:13px;line-height:14px;letter-spacing:0.6px;-webkit-text-stroke:0.12px #000;white-space:pre;color:#000">106</div>
<div style="position:absolute;left:0;width:43.1px;top:986.90px;text-align:right;font-size:13px;line-height:14px;letter-spacing:0.6px;-webkit-text-stroke:0.12px #000;white-space:pre;color:#000">0</div>
<div style="position:absolute;left:0;width:43.1px;top:965.90px;text-align:right;font-size:13px;line-height:14px;letter-spacing:0.6px;-webkit-text-stroke:0.12px #000;white-space:pre;color:#000">0.2</div>
<div style="position:absolute;left:0;width:43.1px;top:944.90px;text-align:right;font-size:13px;line-height:14px;letter-spacing:0.6px;-webkit-text-stroke:0.12px #000;white-space:pre;color:#000">0.4</div>
<div style="position:absolute;left:0;width:43.1px;top:924.90px;text-align:right;font-size:13px;line-height:14px;letter-spacing:0.6px;-webkit-text-stroke:0.12px #000;white-space:pre;color:#000">0.6</div>
<div style="position:absolute;left:0;width:43.1px;top:903.90px;text-align:right;font-size:13px;line-height:14px;letter-spacing:0.6px;-webkit-text-stroke:0.12px #000;white-space:pre;color:#000">0.8</div>
<div style="position:absolute;left:0;width:43.1px;top:882.90px;text-align:right;font-size:13px;line-height:14px;letter-spacing:0.6px;-webkit-text-stroke:0.12px #000;white-space:pre;color:#000">1</div>
<div style="position:absolute;left:132.36px;top:245.80px;font-family:'Liberation Sans',sans-serif;font-size:13px;line-height:13px;color:#000;font-weight:normal;white-space:pre;transform:scaleX(1.1355);transform-origin:0 0;">14:40</div>
<div style="position:absolute;left:254.36px;top:245.80px;font-family:'Liberation Sans',sans-serif;font-size:13px;line-height:13px;color:#000;font-weight:normal;white-space:pre;transform:scaleX(1.1355);transform-origin:0 0;">14:50</div>
<div style="position:absolute;left:409.30px;top:243.30px;font-family:'Liberation Sans',sans-serif;font-size:13px;line-height:13px;color:#000;font-weight:normal;white-space:pre;transform:scaleX(1.0962);transform-origin:0 0;">Tu.6.Dec.16 14:55</div>
<div class="btn" style="left:409px;top:24px;width:20px;height:20px"></div>
<div class="btn" style="left:431px;top:24px;width:20px;height:20px"></div>
<div class="btn" style="left:453px;top:24px;width:20px;height:20px"></div>
<div class="btn" style="left:475px;top:24px;width:20px;height:20px"></div>
<div class="btn" style="left:497px;top:24px;width:20px;height:20px"></div>
<div class="btn" style="left:630px;top:24px;width:20px;height:20px"></div>
<div style="position:absolute;left:523.38px;top:26.11px;font-family:'Liberation Sans',sans-serif;font-size:17px;line-height:17px;color:#000;font-weight:normal;white-space:pre;transform:scaleX(1.1211);transform-origin:0 0;">[K]</div>
<div style="position:absolute;left:412px;top:53px;width:7px;height:2px;background:#ff0000;"></div>
<div style="position:absolute;left:425.80px;top:45.61px;font-family:'Liberation Sans',sans-serif;font-size:17px;line-height:17px;color:#000;font-weight:normal;white-space:pre;transform:scaleX(0.9400);transform-origin:0 0;">T_VTI</div>
<div style="position:absolute;left:512.47px;top:47.97px;font-family:'Liberation Mono',sans-serif;font-size:14px;line-height:14px;color:#5a5a5a;font-weight:normal;white-space:pre;transform:scaleX(1.0321);transform-origin:0 0;letter-spacing:1.5px;">10.454</div>
<div style="position:absolute;left:412px;top:72px;width:7px;height:2px;background:#00ff00;"></div>
<div style="position:absolute;left:425.80px;top:64.61px;font-family:'Liberation Sans',sans-serif;font-size:17px;line-height:17px;color:#000;font-weight:normal;white-space:pre;transform:scaleX(1.0279);transform-origin:0 0;">T_reg</div>
<div style="position:absolute;left:512.44px;top:66.97px;font-family:'Liberation Mono',sans-serif;font-size:14px;line-height:14px;color:#5a5a5a;font-weight:normal;white-space:pre;transform:scaleX(1.0588);transform-origin:0 0;letter-spacing:1.5px;">10</div>
<div style="position:absolute;left:412px;top:91px;width:7px;height:2px;background:#0000ff;"></div>
<div style="position:absolute;left:425.80px;top:83.61px;font-family:'Liberation Sans',sans-serif;font-size:17px;line-height:17px;color:#000;font-weight:normal;white-space:pre;transform:scaleX(1.0162);transform-origin:0 0;">T_sample</div>
<div class="btn" style="left:409px;top:266px;width:20px;height:20px"></div>
<div class="btn" style="left:431px;top:266px;width:20px;height:20px"></div>
<div class="btn" style="left:453px;top:266px;width:20px;height:20px"></div>
<div class="btn" style="left:475px;top:266px;width:20px;height:20px"></div>
<div class="btn" style="left:497px;top:266px;width:20px;height:20px"></div>
<div class="btn" style="left:630px;top:266px;width:20px;height:20px"></div>
<div style="position:absolute;left:523.33px;top:268.11px;font-family:'Liberation Sans',sans-serif;font-size:17px;line-height:17px;color:#000;font-weight:normal;white-space:pre;transform:scaleX(1.1696);transform-origin:0 0;">[W]</div>
<div style="position:absolute;left:412px;top:295px;width:7px;height:2px;background:#00ff00;"></div>
<div style="position:absolute;left:424.75px;top:287.61px;font-family:'Liberation Sans',sans-serif;font-size:17px;line-height:17px;color:#000;font-weight:normal;white-space:pre;transform:scaleX(1.0468);transform-origin:0 0;">Htr_pow</div>
<div style="position:absolute;left:502.50px;top:289.97px;font-family:'Liberation Mono',sans-serif;font-size:14px;line-height:14px;color:#5a5a5a;font-weight:normal;white-space:pre;letter-spacing:1.5px;">0</div>
<div class="btn" style="left:409px;top:389px;width:20px;height:20px"></div>
<div class="btn" style="left:431px;top:389px;width:20px;height:20px"></div>
<div class="btn" style="left:453px;top:389px;width:20px;height:20px"></div>
<div class="btn" style="left:475px;top:389px;width:20px;height:20px"></div>
<div class="btn" style="left:497px;top:389px;width:20px;height:20px"></div>
<div class="btn" style="left:630px;top:389px;width:20px;height:20px"></div>
<div style="position:absolute;left:523.37px;top:391.11px;font-family:'Liberation Sans',sans-serif;font-size:17px;line-height:17px;color:#000;font-weight:normal;white-space:pre;transform:scaleX(1.1264);transform-origin:0 0;">[ln/min]</div>
<div style="position:absolute;left:412px;top:418px;width:7px;height:2px;background:#ff00ff;"></div>
<div style="position:absolute;left:424.77px;top:410.61px;font-family:'Liberation Sans',sans-serif;font-size:17px;line-height:17px;color:#000;font-weight:normal;white-space:pre;transform:scaleX(1.0333);transform-origin:0 0;">nv_flow</div>
<div style="position:absolute;left:496.57px;top:412.97px;font-family:'Liberation Mono',sans-serif;font-size:14px;line-height:14px;color:#5a5a5a;font-weight:normal;white-space:pre;transform:scaleX(1.0304);transform-origin:0 0;letter-spacing:1.5px;">1.971</div>
<div style="position:absolute;left:412px;top:437px;width:7px;height:2px;background:#00ff00;"></div>
<div style="position:absolute;left:424.77px;top:429.61px;font-family:'Liberation Sans',sans-serif;font-size:17px;line-height:17px;color:#000;font-weight:normal;white-space:pre;transform:scaleX(1.0286);transform-origin:0 0;">nv_set</div>
<div style="position:absolute;left:496.56px;top:431.97px;font-family:'Liberation Mono',sans-serif;font-size:14px;line-height:14px;color:#5a5a5a;font-weight:normal;white-space:pre;transform:scaleX(1.0393);transform-origin:0 0;letter-spacing:1.5px;">2.1502</div>
<div class="btn" style="left:409px;top:513px;width:20px;height:20px"></div>
<div class="btn" style="left:431px;top:513px;width:20px;height:20px"></div>
<div class="btn" style="left:453px;top:513px;width:20px;height:20px"></div>
<div class="btn" style="left:475px;top:513px;width:20px;height:20px"></div>
<div class="btn" style="left:497px;top:513px;width:20px;height:20px"></div>
<div class="btn" style="left:630px;top:513px;width:20px;height:20px"></div>
<div style="position:absolute;left:523.38px;top:515.11px;font-family:'Liberation Sans',sans-serif;font-size:17px;line-height:17px;color:#000;font-weight:normal;white-space:pre;transform:scaleX(1.1234);transform-origin:0 0;">[Tesla]</div>
<div style="position:absolute;left:412px;top:542px;width:7px;height:2px;background:#ff0000;"></div>
<div style="position:absolute;left:424.71px;top:534.61px;font-family:'Liberation Sans',sans-serif;font-size:17px;line-height:17px;color:#000;font-weight:normal;white-space:pre;transform:scaleX(1.0875);transform-origin:0 0;">Current</div>
<div style="position:absolute;left:515.50px;top:536.97px;font-family:'Liberation Mono',sans-serif;font-size:14px;line-height:14px;color:#5a5a5a;font-weight:normal;white-space:pre;letter-spacing:1.5px;">0</div>
<div style="position:absolute;left:412px;top:561px;width:7px;height:2px;background:#00ff00;"></div>
<div style="position:absolute;left:424.78px;top:553.61px;font-family:'Liberation Sans',sans-serif;font-size:17px;line-height:17px;color:#000;font-weight:normal;white-space:pre;transform:scaleX(1.0169);transform-origin:0 0;">Mag_Field</div>
<div style="position:absolute;left:515.50px;top:555.97px;font-family:'Liberation Mono',sans-serif;font-size:14px;line-height:14px;color:#5a5a5a;font-weight:normal;white-space:pre;letter-spacing:1.5px;">0</div>
<div class="btn" style="left:409px;top:637px;width:20px;height:20px"></div>
<div class="btn" style="left:431px;top:637px;width:20px;height:20px"></div>
<div class="btn" style="left:453px;top:637px;width:20px;height:20px"></div>
<div class="btn" style="left:475px;top:637px;width:20px;height:20px"></div>
<div class="btn" style="left:497px;top:637px;width:20px;height:20px"></div>
<div class="btn" style="left:630px;top:637px;width:20px;height:20px"></div>
<div style="position:absolute;left:523.38px;top:639.11px;font-family:'Liberation Sans',sans-serif;font-size:17px;line-height:17px;color:#000;font-weight:normal;white-space:pre;transform:scaleX(1.1211);transform-origin:0 0;">[K]</div>
<div style="position:absolute;left:412px;top:666px;width:7px;height:2px;background:#ff0000;"></div>
<div style="position:absolute;left:424.77px;top:658.61px;font-family:'Liberation Sans',sans-serif;font-size:17px;line-height:17px;color:#000;font-weight:normal;white-space:pre;transform:scaleX(1.0303);transform-origin:0 0;">N2_Upper</div>
<div style="position:absolute;left:552.37px;top:660.97px;font-family:'Liberation Mono',sans-serif;font-size:14px;line-height:14px;color:#5a5a5a;font-weight:normal;white-space:pre;transform:scaleX(1.0286);transform-origin:0 0;letter-spacing:1.5px;">78.439</div>
<div style="position:absolute;left:412px;top:685px;width:7px;height:2px;background:#00ff00;"></div>
<div style="position:absolute;left:424.77px;top:677.61px;font-family:'Liberation Sans',sans-serif;font-size:17px;line-height:17px;color:#000;font-weight:normal;white-space:pre;transform:scaleX(1.0303);transform-origin:0 0;">N2_Lower</div>
<div style="position:absolute;left:552.37px;top:679.97px;font-family:'Liberation Mono',sans-serif;font-size:14px;line-height:14px;color:#5a5a5a;font-weight:normal;white-space:pre;transform:scaleX(1.0286);transform-origin:0 0;letter-spacing:1.5px;">79.759</div>
<div style="position:absolute;left:412px;top:704px;width:7px;height:2px;background:#a52a2a;"></div>
<div style="position:absolute;left:424.73px;top:696.61px;font-family:'Liberation Sans',sans-serif;font-size:17px;line-height:17px;color:#000;font-weight:normal;white-space:pre;transform:scaleX(1.0684);transform-origin:0 0;">MagBot</div>
<div style="position:absolute;left:562.37px;top:698.97px;font-family:'Liberation Mono',sans-serif;font-size:14px;line-height:14px;color:#5a5a5a;font-weight:normal;white-space:pre;transform:scaleX(1.0286);transform-origin:0 0;letter-spacing:1.5px;">3.3353</div>
<div style="position:absolute;left:412px;top:723px;width:7px;height:2px;background:#87ceeb;"></div>
<div style="position:absolute;left:424.73px;top:715.61px;font-family:'Liberation Sans',sans-serif;font-size:17px;line-height:17px;color:#000;font-weight:normal;white-space:pre;transform:scaleX(1.0729);transform-origin:0 0;">MagTop</div>
<div style="position:absolute;left:562.37px;top:717.97px;font-family:'Liberation Mono',sans-serif;font-size:14px;line-height:14px;color:#5a5a5a;font-weight:normal;white-space:pre;transform:scaleX(1.0286);transform-origin:0 0;letter-spacing:1.5px;">3.3351</div>
<div style="position:absolute;left:412px;top:742px;width:7px;height:2px;background:#808080;"></div>
<div style="position:absolute;left:425.80px;top:734.61px;font-family:'Liberation Sans',sans-serif;font-size:17px;line-height:17px;color:#000;font-weight:normal;white-space:pre;transform:scaleX(1.0282);transform-origin:0 0;">AboveLambda</div>
<div style="position:absolute;left:562.37px;top:736.97px;font-family:'Liberation Mono',sans-serif;font-size:14px;line-height:14px;color:#5a5a5a;font-weight:normal;white-space:pre;transform:scaleX(1.0286);transform-origin:0 0;letter-spacing:1.5px;">4.2235</div>
<div class="btn" style="left:409px;top:761px;width:20px;height:20px"></div>
<div class="btn" style="left:431px;top:761px;width:20px;height:20px"></div>
<div class="btn" style="left:453px;top:761px;width:20px;height:20px"></div>
<div class="btn" style="left:475px;top:761px;width:20px;height:20px"></div>
<div class="btn" style="left:497px;top:761px;width:20px;height:20px"></div>
<div class="btn" style="left:630px;top:761px;width:20px;height:20px"></div>
<div style="position:absolute;left:523.29px;top:763.11px;font-family:'Liberation Sans',sans-serif;font-size:17px;line-height:17px;color:#000;font-weight:normal;white-space:pre;transform:scaleX(1.2136);transform-origin:0 0;">[%]</div>
<div style="position:absolute;left:412px;top:790px;width:7px;height:2px;background:#b22222;"></div>
<div style="position:absolute;left:424.75px;top:782.61px;font-family:'Liberation Sans',sans-serif;font-size:17px;line-height:17px;color:#000;font-weight:normal;white-space:pre;transform:scaleX(1.0483);transform-origin:0 0;">HeLevel</div>
<div style="position:absolute;left:500.98px;top:784.97px;font-family:'Liberation Mono',sans-serif;font-size:14px;line-height:14px;color:#5a5a5a;font-weight:normal;white-space:pre;transform:scaleX(1.0217);transform-origin:0 0;letter-spacing:1.5px;">101.1</div>
<div class="btn" style="left:409px;top:884px;width:20px;height:20px"></div>
<div class="btn" style="left:431px;top:884px;width:20px;height:20px"></div>
<div class="btn" style="left:453px;top:884px;width:20px;height:20px"></div>
<div class="btn" style="left:475px;top:884px;width:20px;height:20px"></div>
<div class="btn" style="left:497px;top:884px;width:20px;height:20px"></div>
<div class="btn" style="left:630px;top:884px;width:20px;height:20px"></div>
<div style="position:absolute;left:523.32px;top:886.11px;font-family:'Liberation Sans',sans-serif;font-size:17px;line-height:17px;color:#000;font-weight:normal;white-space:pre;transform:scaleX(1.1761);transform-origin:0 0;">[mbar]</div>
<div style="position:absolute;left:412px;top:913px;width:7px;height:2px;background:#ffa500;"></div>
<div style="position:absolute;left:424.83px;top:905.61px;font-family:'Liberation Sans',sans-serif;font-size:17px;line-height:17px;color:#000;font-weight:normal;white-space:pre;transform:scaleX(0.9667);transform-origin:0 0;">LPR_flow</div>
<div style="position:absolute;left:412px;top:932px;width:7px;height:2px;background:#b22222;"></div>
<div style="position:absolute;left:424.84px;top:924.61px;font-family:'Liberation Sans',sans-serif;font-size:17px;line-height:17px;color:#000;font-weight:normal;white-space:pre;transform:scaleX(0.9578);transform-origin:0 0;">LPR_set</div>
<div style="position:absolute;left:635px;top:659px;width:15px;height:95px;background:repeating-conic-gradient(#c8c8c8 0 25%,#ececec 0 50%) 0 0/2px 2px;"></div>
<div class="btn" style="left:635px;top:659px;width:15px;height:15px"></div>
<div class="btn" style="left:635px;top:675px;width:15px;height:52px"></div>
<div class="btn" style="left:635px;top:739px;width:15px;height:15px"></div>
<div style="position:absolute;left:8.86px;top:1013.63px;font-family:'Liberation Sans',sans-serif;font-size:16.5px;line-height:16.5px;color:#000;font-weight:normal;white-space:pre;transform:scaleX(1.0426);transform-origin:0 0;">Range</div>
<div style="position:absolute;left:63px;top:1009px;width:66px;height:26px;background:#fff;border-top:2px solid #000;border-left:2px solid #000;border-bottom:1px solid #fff;border-right:1px solid #fff;"></div>
<div style="position:absolute;left:67.67px;top:1013.63px;font-family:'Liberation Sans',sans-serif;font-size:16.5px;line-height:16.5px;color:#000;font-weight:normal;white-space:pre;transform:scaleX(1.1300);transform-origin:0 0;">30m</div>
<div class="btn" style="left:112px;top:1012px;width:16px;height:20px"></div>
<div class="btn" style="left:133px;top:1008px;width:35px;height:29px"></div>
<div style="position:absolute;left:138.90px;top:1013.63px;font-family:'Liberation Sans',sans-serif;font-size:16.5px;line-height:16.5px;color:#000;font-weight:normal;white-space:pre;">OK</div>
<div class="btn" style="left:172px;top:1008px;width:76px;height:29px"></div>
<div style="position:absolute;left:177.41px;top:1013.63px;font-family:'Liberation Sans',sans-serif;font-size:16.5px;line-height:16.5px;color:#000;font-weight:normal;white-space:pre;transform:scaleX(1.0914);transform-origin:0 0;">Settings</div>
<div class="btn" style="left:252px;top:1008px;width:79px;height:29px"></div>
<div style="position:absolute;left:257.22px;top:1013.63px;font-family:'Liberation Sans',sans-serif;font-size:16.5px;line-height:16.5px;color:#000;font-weight:normal;white-space:pre;transform:scaleX(1.0754);transform-origin:0 0;">Show All</div>
<div class="btn" style="left:335px;top:1008px;width:64px;height:29px"></div>
<div style="position:absolute;left:340.38px;top:1013.63px;font-family:'Liberation Sans',sans-serif;font-size:16.5px;line-height:16.5px;color:#000;font-weight:normal;white-space:pre;transform:scaleX(1.1222);transform-origin:0 0;">export</div>
<div style="position:absolute;left:402px;top:1015px;width:13px;height:13px;background:#fff;border-top:1.5px solid #000;border-left:1.5px solid #000;"></div>
<div style="position:absolute;left:420.69px;top:1013.03px;font-family:'Liberation Sans',sans-serif;font-size:16.5px;line-height:16.5px;color:#000;font-weight:normal;white-space:pre;transform:scaleX(1.1072);transform-origin:0 0;">live mode</div>
<div class="btn" style="left:552px;top:1012px;width:20px;height:20px"></div>
<div class="btn" style="left:576px;top:1012px;width:20px;height:20px"></div>
<div class="btn" style="left:600px;top:1012px;width:20px;height:20px"></div>
<div class="btn" style="left:624px;top:1012px;width:20px;height:20px"></div>
<div style="position:absolute;left:651px;top:23px;width:1px;height:1021px;background:#555;"></div>
<div style="position:absolute;left:652px;top:23px;width:1px;height:1021px;background:#fff;"></div>
<div style="position:absolute;left:655px;top:23px;width:1px;height:1021px;background:#444;"></div>
<div style="position:absolute;left:656px;top:23px;width:1px;height:1021px;background:#000;"></div>
<div style="position:absolute;left:664.04px;top:28.81px;font-family:'Liberation Sans',sans-serif;font-size:25.5px;line-height:25.5px;color:#000;font-weight:normal;white-space:pre;transform:scaleX(0.8778);transform-origin:0 0;">PREP2</div>
<div class="btn" style="left:747px;top:28px;width:117px;height:29px"></div>
<div style="position:absolute;left:750.56px;top:33.61px;font-family:'Liberation Sans',sans-serif;font-size:17px;line-height:17px;color:#000;font-weight:normal;white-space:pre;transform:scaleX(1.0375);transform-origin:0 0;">Device: MA09</div>
<div class="btn" style="left:872px;top:28px;width:102px;height:29px"></div>
<div style="position:absolute;left:875.37px;top:33.61px;font-family:'Liberation Sans',sans-serif;font-size:17px;line-height:17px;color:#000;font-weight:normal;white-space:pre;transform:scaleX(1.0326);transform-origin:0 0;">Stick: MA09</div>
<div class="btn" style="left:981px;top:28px;width:39px;height:29px"></div>
<div style="position:absolute;left:985.50px;top:33.61px;font-family:'Liberation Sans',sans-serif;font-size:17px;line-height:17px;color:#000;font-weight:normal;white-space:pre;transform:scaleX(1.0241);transform-origin:0 0;">Add</div>
<div style="position:absolute;left:678.30px;top:65.61px;font-family:'Liberation Sans',sans-serif;font-size:17px;line-height:17px;color:#000;font-weight:bold;white-space:pre;transform:scaleX(1.1496);transform-origin:0 0;">temperature (LakeShore 340)</div>
<div style="position:absolute;left:677.18px;top:95.61px;font-family:'Liberation Sans',sans-serif;font-size:17px;line-height:17px;color:#000;font-weight:bold;white-space:pre;transform:scaleX(1.1230);transform-origin:0 0;">needle valve</div>
<div style="position:absolute;left:677.17px;top:125.61px;font-family:'Liberation Sans',sans-serif;font-size:17px;line-height:17px;color:#000;font-weight:bold;white-space:pre;transform:scaleX(1.1296);transform-origin:0 0;">He pump</div>
<div style="position:absolute;left:677.18px;top:155.61px;font-family:'Liberation Sans',sans-serif;font-size:17px;line-height:17px;color:#000;font-weight:bold;white-space:pre;transform:scaleX(1.1234);transform-origin:0 0;">magnetic field control</div>
<div style="position:absolute;left:677.17px;top:185.61px;font-family:'Liberation Sans',sans-serif;font-size:17px;line-height:17px;color:#000;font-weight:bold;white-space:pre;transform:scaleX(1.1264);transform-origin:0 0;">LN2 fill settings</div>
<div style="position:absolute;left:677.16px;top:215.61px;font-family:'Liberation Sans',sans-serif;font-size:17px;line-height:17px;color:#000;font-weight:bold;white-space:pre;transform:scaleX(1.1438);transform-origin:0 0;">LHe level meter settings</div>
<div style="position:absolute;left:677.16px;top:245.61px;font-family:'Liberation Sans',sans-serif;font-size:17px;line-height:17px;color:#000;font-weight:bold;white-space:pre;transform:scaleX(1.1410);transform-origin:0 0;">lambda point refrigerator needle valve settings</div>
<div style="position:absolute;left:677.16px;top:275.61px;font-family:'Liberation Sans',sans-serif;font-size:17px;line-height:17px;color:#000;font-weight:bold;white-space:pre;transform:scaleX(1.1385);transform-origin:0 0;">lpr control parameters</div>
<div style="position:absolute;left:677.10px;top:305.61px;font-family:'Liberation Sans',sans-serif;font-size:17px;line-height:17px;color:#000;font-weight:bold;white-space:pre;transform:scaleX(1.2041);transform-origin:0 0;">parameter table /tt/tm</div>
<div style="position:absolute;left:677.25px;top:335.61px;font-family:'Liberation Sans',sans-serif;font-size:17px;line-height:17px;color:#000;font-weight:bold;white-space:pre;transform:scaleX(1.0467);transform-origin:0 0;">CCU4</div>
<div style="position:absolute;left:677.19px;top:365.61px;font-family:'Liberation Sans',sans-serif;font-size:17px;line-height:17px;color:#000;font-weight:bold;white-space:pre;transform:scaleX(1.1093);transform-origin:0 0;">configuration</div>
<div style="position:absolute;left:657px;top:422px;width:648px;height:1px;background:#fff;"></div>
<div style="position:absolute;left:657px;top:423px;width:648px;height:1px;background:#ececec;"></div>
<div style="position:absolute;left:657px;top:425px;width:648px;height:2px;background:#000;"></div>
<div style="position:absolute;left:661.49px;top:432.03px;font-family:'Liberation Sans',sans-serif;font-size:16.5px;line-height:16.5px;color:#000;font-weight:normal;white-space:pre;transform:scaleX(1.1101);transform-origin:0 0;">Input/Output History:</div>
<div style="position:absolute;left:661px;top:455px;width:640px;height:531px;background:#fff;border-top:2px solid #000;border-left:2px solid #000;overflow:hidden"></div>
<div style="position:absolute;left:663px;top:457px;width:620px;height:528px;overflow:hidden"></div>
<div style="position:absolute;left:663px;top:457px;width:620px;height:528px;overflow:hidden"><div style="position:absolute;left:4px;top:-9.41px;font-family:'Liberation Mono',monospace;font-size:14.5px;line-height:14.5px;letter-spacing:1.42px;color:#3a3aff;white-space:pre">run tt 80</div><div style="position:absolute;left:4px;top:10.59px;font-family:'Liberation Mono',monospace;font-size:14.5px;line-height:14.5px;letter-spacing:1.42px;color:#444444;white-space:pre">run tt to 80</div><div style="position:absolute;left:4px;top:50.59px;font-family:'Liberation Mono',monospace;font-size:14.5px;line-height:14.5px;letter-spacing:1.42px;color:#3a3aff;white-space:pre">ignoreMsg lnv 1</div><div style="position:absolute;left:4px;top:90.59px;font-family:'Liberation Mono',monospace;font-size:14.5px;line-height:14.5px;letter-spacing:1.42px;color:#444444;white-space:pre">=== 13:57:11 ===</div><div style="position:absolute;left:4px;top:110.59px;font-family:'Liberation Mono',monospace;font-size:14.5px;line-height:14.5px;letter-spacing:1.42px;color:#3a3aff;white-space:pre">nv 4</div><div style="position:absolute;left:4px;top:130.59px;font-family:'Liberation Mono',monospace;font-size:14.5px;line-height:14.5px;letter-spacing:1.42px;color:#444444;white-space:pre">OK: nv 4</div><div style="position:absolute;left:4px;top:170.59px;font-family:'Liberation Mono',monospace;font-size:14.5px;line-height:14.5px;letter-spacing:1.42px;color:#3a3aff;white-space:pre">nv 2</div><div style="position:absolute;left:4px;top:190.59px;font-family:'Liberation Mono',monospace;font-size:14.5px;line-height:14.5px;letter-spacing:1.42px;color:#444444;white-space:pre">OK: nv 2</div><div style="position:absolute;left:4px;top:230.59px;font-family:'Liberation Mono',monospace;font-size:14.5px;line-height:14.5px;letter-spacing:1.42px;color:#3a3aff;white-space:pre">nv 3</div><div style="position:absolute;left:4px;top:250.59px;font-family:'Liberation Mono',monospace;font-size:14.5px;line-height:14.5px;letter-spacing:1.42px;color:#444444;white-space:pre">OK: nv 3</div><div style="position:absolute;left:4px;top:290.59px;font-family:'Liberation Mono',monospace;font-size:14.5px;line-height:14.5px;letter-spacing:1.42px;color:#3a3aff;white-space:pre">nv 2</div><div style="position:absolute;left:4px;top:310.59px;font-family:'Liberation Mono',monospace;font-size:14.5px;line-height:14.5px;letter-spacing:1.42px;color:#444444;white-space:pre">OK: nv 2</div><div style="position:absolute;left:4px;top:350.59px;font-family:'Liberation Mono',monospace;font-size:14.5px;line-height:14.5px;letter-spacing:1.42px;color:#3a3aff;white-space:pre">nv 3</div><div style="position:absolute;left:4px;top:370.59px;font-family:'Liberation Mono',monospace;font-size:14.5px;line-height:14.5px;letter-spacing:1.42px;color:#444444;white-space:pre">OK: nv 3</div><div style="position:absolute;left:4px;top:410.59px;font-family:'Liberation Mono',monospace;font-size:14.5px;line-height:14.5px;letter-spacing:1.42px;color:#3a3aff;white-space:pre">nv 2</div><div style="position:absolute;left:4px;top:430.59px;font-family:'Liberation Mono',monospace;font-size:14.5px;line-height:14.5px;letter-spacing:1.42px;color:#444444;white-space:pre">OK: nv 2</div><div style="position:absolute;left:4px;top:470.59px;font-family:'Liberation Mono',monospace;font-size:14.5px;line-height:14.5px;letter-spacing:1.42px;color:#444444;white-space:pre">=== 14:17:04 ===</div><div style="position:absolute;left:4px;top:490.59px;font-family:'Liberation Mono',monospace;font-size:14.5px;line-height:14.5px;letter-spacing:1.42px;color:#3a3aff;white-space:pre">run tt 10</div><div style="position:absolute;left:4px;top:510.59px;font-family:'Liberation Mono',monospace;font-size:14.5px;line-height:14.5px;letter-spacing:1.42px;color:#444444;white-space:pre">run tt to 10</div></div>
<div style="position:absolute;left:1284px;top:472px;width:15px;height:484px;background:repeating-conic-gradient(#d4d4d4 0 25%,#fff 0 50%) 0 0/2px 2px;"></div>
<div class="btn" style="left:1284px;top:457px;width:15px;height:15px"></div>
<div class="btn" style="left:1284px;top:956px;width:15px;height:13px"></div>
<div class="btn" style="left:1284px;top:970px;width:15px;height:15px"></div>
<div style="position:absolute;left:661.60px;top:991.63px;font-family:'Liberation Sans',sans-serif;font-size:16.5px;line-height:16.5px;color:#000;font-weight:normal;white-space:pre;transform:scaleX(1.1025);transform-origin:0 0;">Command Input:</div>
<div style="position:absolute;left:661px;top:1014px;width:640px;height:28px;background:#fff;border-top:2px solid #000;border-left:2px solid #000;"></div>
<div style="position:absolute;left:1290px;top:1030px;width:14px;height:14px;background:#ececec;"></div>
<svg width="1306" height="1049" style="position:absolute;left:0;top:0"><path d="M413 35.7 L419 30.4 L425 35.7" fill="none" stroke="#000" stroke-width="1.6"/><path d="M435 32 L441 37.8 L447 32" fill="none" stroke="#000" stroke-width="1.6"/><path d="M457 32.4 L463 26.9 L469 32.4 M457 35.2 L463 40.4 L469 35.2" fill="none" stroke="#000" stroke-width="1.6"/><path d="M479.8 33.2 L485.8 27.7 L491.8 33.2 M479.8 36 L485.8 41.2 L491.8 36" fill="none" stroke="#fff" stroke-width="1.6"/><path d="M479 32.4 L485 26.9 L491 32.4 M479 35.2 L485 40.4 L491 35.2" fill="none" stroke="#c4c4c4" stroke-width="1.4"/><rect x="477" y="26.8" width="5" height="1" fill="#c8c8c8"/><rect x="488" y="26.8" width="4.5" height="1" fill="#c8c8c8"/><rect x="477" y="28.0" width="5" height="1" fill="#fff"/><rect x="488" y="28.0" width="4.5" height="1" fill="#fff"/><rect x="477" y="39.8" width="5" height="1" fill="#c8c8c8"/><rect x="488" y="39.8" width="4.5" height="1" fill="#c8c8c8"/><rect x="477" y="41.0" width="5" height="1" fill="#fff"/><rect x="488" y="41.0" width="4.5" height="1" fill="#fff"/><rect x="500" y="28" width="1" height="5" fill="#000"/><rect x="504" y="29" width="2" height="1" fill="#000"/><rect x="504" y="32" width="2" height="1" fill="#000"/><rect x="503" y="30" width="1" height="2" fill="#000"/><rect x="506" y="30" width="1" height="2" fill="#000"/><rect x="510" y="29" width="2" height="1" fill="#000"/><rect x="509" y="30" width="1" height="1" fill="#000"/><rect x="512" y="29" width="1" height="4" fill="#000"/><rect x="510" y="31" width="2" height="1" fill="#000"/><rect x="510" y="33" width="2" height="1" fill="#000"/><rect x="500" y="34" width="2" height="5" fill="#000"/><rect x="504" y="34" width="2" height="1" fill="#000"/><rect x="504" y="36" width="2" height="3" fill="#000"/><rect x="508" y="35" width="4" height="2" fill="#000"/><rect x="508" y="35" width="2" height="4" fill="#000"/><rect x="511" y="36" width="2" height="3" fill="#000"/><path d="M634.5 28 L645.5 39 M645.5 28 L634.5 39" fill="none" stroke="#000" stroke-width="1.5"/><path d="M413 277.7 L419 272.4 L425 277.7" fill="none" stroke="#000" stroke-width="1.6"/><path d="M435 274 L441 279.8 L447 274" fill="none" stroke="#000" stroke-width="1.6"/><path d="M457 274.4 L463 268.9 L469 274.4 M457 277.2 L463 282.4 L469 277.2" fill="none" stroke="#000" stroke-width="1.6"/><path d="M479.8 275.2 L485.8 269.7 L491.8 275.2 M479.8 278 L485.8 283.2 L491.8 278" fill="none" stroke="#fff" stroke-width="1.6"/><path d="M479 274.4 L485 268.9 L491 274.4 M479 277.2 L485 282.4 L491 277.2" fill="none" stroke="#c4c4c4" stroke-width="1.4"/><rect x="477" y="268.8" width="5" height="1" fill="#c8c8c8"/><rect x="488" y="268.8" width="4.5" height="1" fill="#c8c8c8"/><rect x="477" y="270.0" width="5" height="1" fill="#fff"/><rect x="488" y="270.0" width="4.5" height="1" fill="#fff"/><rect x="477" y="281.8" width="5" height="1" fill="#c8c8c8"/><rect x="488" y="281.8" width="4.5" height="1" fill="#c8c8c8"/><rect x="477" y="283.0" width="5" height="1" fill="#fff"/><rect x="488" y="283.0" width="4.5" height="1" fill="#fff"/><rect x="500" y="270" width="1" height="5" fill="#000"/><rect x="504" y="271" width="2" height="1" fill="#000"/><rect x="504" y="274" width="2" height="1" fill="#000"/><rect x="503" y="272" width="1" height="2" fill="#000"/><rect x="506" y="272" width="1" height="2" fill="#000"/><rect x="510" y="271" width="2" height="1" fill="#000"/><rect x="509" y="272" width="1" height="1" fill="#000"/><rect x="512" y="271" width="1" height="4" fill="#000"/><rect x="510" y="273" width="2" height="1" fill="#000"/><rect x="510" y="275" width="2" height="1" fill="#000"/><rect x="500" y="276" width="2" height="5" fill="#000"/><rect x="504" y="276" width="2" height="1" fill="#000"/><rect x="504" y="278" width="2" height="3" fill="#000"/><rect x="508" y="277" width="4" height="2" fill="#000"/><rect x="508" y="277" width="2" height="4" fill="#000"/><rect x="511" y="278" width="2" height="3" fill="#000"/><path d="M634.5 270 L645.5 281 M645.5 270 L634.5 281" fill="none" stroke="#000" stroke-width="1.5"/><path d="M413 400.7 L419 395.4 L425 400.7" fill="none" stroke="#000" stroke-width="1.6"/><path d="M435 397 L441 402.8 L447 397" fill="none" stroke="#000" stroke-width="1.6"/><path d="M457 397.4 L463 391.9 L469 397.4 M457 400.2 L463 405.4 L469 400.2" fill="none" stroke="#000" stroke-width="1.6"/><path d="M479.8 398.2 L485.8 392.7 L491.8 398.2 M479.8 401 L485.8 406.2 L491.8 401" fill="none" stroke="#fff" stroke-width="1.6"/><path d="M479 397.4 L485 391.9 L491 397.4 M479 400.2 L485 405.4 L491 400.2" fill="none" stroke="#c4c4c4" stroke-width="1.4"/><rect x="477" y="391.8" width="5" height="1" fill="#c8c8c8"/><rect x="488" y="391.8" width="4.5" height="1" fill="#c8c8c8"/><rect x="477" y="393.0" width="5" height="1" fill="#fff"/><rect x="488" y="393.0" width="4.5" height="1" fill="#fff"/><rect x="477" y="404.8" width="5" height="1" fill="#c8c8c8"/><rect x="488" y="404.8" width="4.5" height="1" fill="#c8c8c8"/><rect x="477" y="406.0" width="5" height="1" fill="#fff"/><rect x="488" y="406.0" width="4.5" height="1" fill="#fff"/><rect x="500" y="393" width="1" height="5" fill="#000"/><rect x="504" y="394" width="2" height="1" fill="#000"/><rect x="504" y="397" width="2" height="1" fill="#000"/><rect x="503" y="395" width="1" height="2" fill="#000"/><rect x="506" y="395" width="1" height="2" fill="#000"/><rect x="510" y="394" width="2" height="1" fill="#000"/><rect x="509" y="395" width="1" height="1" fill="#000"/><rect x="512" y="394" width="1" height="4" fill="#000"/><rect x="510" y="396" width="2" height="1" fill="#000"/><rect x="510" y="398" width="2" height="1" fill="#000"/><rect x="500" y="399" width="2" height="5" fill="#000"/><rect x="504" y="399" width="2" height="1" fill="#000"/><rect x="504" y="401" width="2" height="3" fill="#000"/><rect x="508" y="400" width="4" height="2" fill="#000"/><rect x="508" y="400" width="2" height="4" fill="#000"/><rect x="511" y="401" width="2" height="3" fill="#000"/><path d="M634.5 393 L645.5 404 M645.5 393 L634.5 404" fill="none" stroke="#000" stroke-width="1.5"/><path d="M413 524.7 L419 519.4 L425 524.7" fill="none" stroke="#000" stroke-width="1.6"/><path d="M435 521 L441 526.8 L447 521" fill="none" stroke="#000" stroke-width="1.6"/><path d="M457 521.4 L463 515.9 L469 521.4 M457 524.2 L463 529.4 L469 524.2" fill="none" stroke="#000" stroke-width="1.6"/><path d="M479.8 522.2 L485.8 516.7 L491.8 522.2 M479.8 525 L485.8 530.2 L491.8 525" fill="none" stroke="#fff" stroke-width="1.6"/><path d="M479 521.4 L485 515.9 L491 521.4 M479 524.2 L485 529.4 L491 524.2" fill="none" stroke="#c4c4c4" stroke-width="1.4"/><rect x="477" y="515.8" width="5" height="1" fill="#c8c8c8"/><rect x="488" y="515.8" width="4.5" height="1" fill="#c8c8c8"/><rect x="477" y="517.0" width="5" height="1" fill="#fff"/><rect x="488" y="517.0" width="4.5" height="1" fill="#fff"/><rect x="477" y="528.8" width="5" height="1" fill="#c8c8c8"/><rect x="488" y="528.8" width="4.5" height="1" fill="#c8c8c8"/><rect x="477" y="530.0" width="5" height="1" fill="#fff"/><rect x="488" y="530.0" width="4.5" height="1" fill="#fff"/><rect x="500" y="517" width="1" height="5" fill="#000"/><rect x="504" y="518" width="2" height="1" fill="#000"/><rect x="504" y="521" width="2" height="1" fill="#000"/><rect x="503" y="519" width="1" height="2" fill="#000"/><rect x="506" y="519" width="1" height="2" fill="#000"/><rect x="510" y="518" width="2" height="1" fill="#000"/><rect x="509" y="519" width="1" height="1" fill="#000"/><rect x="512" y="518" width="1" height="4" fill="#000"/><rect x="510" y="520" width="2" height="1" fill="#000"/><rect x="510" y="522" width="2" height="1" fill="#000"/><rect x="500" y="523" width="2" height="5" fill="#000"/><rect x="504" y="523" width="2" height="1" fill="#000"/><rect x="504" y="525" width="2" height="3" fill="#000"/><rect x="508" y="524" width="4" height="2" fill="#000"/><rect x="508" y="524" width="2" height="4" fill="#000"/><rect x="511" y="525" width="2" height="3" fill="#000"/><path d="M634.5 517 L645.5 528 M645.5 517 L634.5 528" fill="none" stroke="#000" stroke-width="1.5"/><path d="M413 648.7 L419 643.4 L425 648.7" fill="none" stroke="#000" stroke-width="1.6"/><path d="M435 645 L441 650.8 L447 645" fill="none" stroke="#000" stroke-width="1.6"/><path d="M457 645.4 L463 639.9 L469 645.4 M457 648.2 L463 653.4 L469 648.2" fill="none" stroke="#000" stroke-width="1.6"/><path d="M479.8 646.2 L485.8 640.7 L491.8 646.2 M479.8 649 L485.8 654.2 L491.8 649" fill="none" stroke="#fff" stroke-width="1.6"/><path d="M479 645.4 L485 639.9 L491 645.4 M479 648.2 L485 653.4 L491 648.2" fill="none" stroke="#c4c4c4" stroke-width="1.4"/><rect x="477" y="639.8" width="5" height="1" fill="#c8c8c8"/><rect x="488" y="639.8" width="4.5" height="1" fill="#c8c8c8"/><rect x="477" y="641.0" width="5" height="1" fill="#fff"/><rect x="488" y="641.0" width="4.5" height="1" fill="#fff"/><rect x="477" y="652.8" width="5" height="1" fill="#c8c8c8"/><rect x="488" y="652.8" width="4.5" height="1" fill="#c8c8c8"/><rect x="477" y="654.0" width="5" height="1" fill="#fff"/><rect x="488" y="654.0" width="4.5" height="1" fill="#fff"/><rect x="500" y="641" width="1" height="5" fill="#000"/><rect x="504" y="642" width="2" height="1" fill="#000"/><rect x="504" y="645" width="2" height="1" fill="#000"/><rect x="503" y="643" width="1" height="2" fill="#000"/><rect x="506" y="643" width="1" height="2" fill="#000"/><rect x="510" y="642" width="2" height="1" fill="#000"/><rect x="509" y="643" width="1" height="1" fill="#000"/><rect x="512" y="642" width="1" height="4" fill="#000"/><rect x="510" y="644" width="2" height="1" fill="#000"/><rect x="510" y="646" width="2" height="1" fill="#000"/><rect x="500" y="647" width="2" height="5" fill="#000"/><rect x="504" y="647" width="2" height="1" fill="#000"/><rect x="504" y="649" width="2" height="3" fill="#000"/><rect x="508" y="648" width="4" height="2" fill="#000"/><rect x="508" y="648" width="2" height="4" fill="#000"/><rect x="511" y="649" width="2" height="3" fill="#000"/><path d="M634.5 641 L645.5 652 M645.5 641 L634.5 652" fill="none" stroke="#000" stroke-width="1.5"/><path d="M413 772.7 L419 767.4 L425 772.7" fill="none" stroke="#000" stroke-width="1.6"/><path d="M435 769 L441 774.8 L447 769" fill="none" stroke="#000" stroke-width="1.6"/><path d="M457 769.4 L463 763.9 L469 769.4 M457 772.2 L463 777.4 L469 772.2" fill="none" stroke="#000" stroke-width="1.6"/><path d="M479.8 770.2 L485.8 764.7 L491.8 770.2 M479.8 773 L485.8 778.2 L491.8 773" fill="none" stroke="#fff" stroke-width="1.6"/><path d="M479 769.4 L485 763.9 L491 769.4 M479 772.2 L485 777.4 L491 772.2" fill="none" stroke="#c4c4c4" stroke-width="1.4"/><rect x="477" y="763.8" width="5" height="1" fill="#c8c8c8"/><rect x="488" y="763.8" width="4.5" height="1" fill="#c8c8c8"/><rect x="477" y="765.0" width="5" height="1" fill="#fff"/><rect x="488" y="765.0" width="4.5" height="1" fill="#fff"/><rect x="477" y="776.8" width="5" height="1" fill="#c8c8c8"/><rect x="488" y="776.8" width="4.5" height="1" fill="#c8c8c8"/><rect x="477" y="778.0" width="5" height="1" fill="#fff"/><rect x="488" y="778.0" width="4.5" height="1" fill="#fff"/><rect x="500" y="765" width="1" height="5" fill="#000"/><rect x="504" y="766" width="2" height="1" fill="#000"/><rect x="504" y="769" width="2" height="1" fill="#000"/><rect x="503" y="767" width="1" height="2" fill="#000"/><rect x="506" y="767" width="1" height="2" fill="#000"/><rect x="510" y="766" width="2" height="1" fill="#000"/><rect x="509" y="767" width="1" height="1" fill="#000"/><rect x="512" y="766" width="1" height="4" fill="#000"/><rect x="510" y="768" width="2" height="1" fill="#000"/><rect x="510" y="770" width="2" height="1" fill="#000"/><rect x="500" y="771" width="2" height="5" fill="#000"/><rect x="504" y="771" width="2" height="1" fill="#000"/><rect x="504" y="773" width="2" height="3" fill="#000"/><rect x="508" y="772" width="4" height="2" fill="#000"/><rect x="508" y="772" width="2" height="4" fill="#000"/><rect x="511" y="773" width="2" height="3" fill="#000"/><path d="M634.5 765 L645.5 776 M645.5 765 L634.5 776" fill="none" stroke="#000" stroke-width="1.5"/><path d="M413 895.7 L419 890.4 L425 895.7" fill="none" stroke="#000" stroke-width="1.6"/><path d="M435 892 L441 897.8 L447 892" fill="none" stroke="#000" stroke-width="1.6"/><path d="M457 892.4 L463 886.9 L469 892.4 M457 895.2 L463 900.4 L469 895.2" fill="none" stroke="#000" stroke-width="1.6"/><path d="M479.8 893.2 L485.8 887.7 L491.8 893.2 M479.8 896 L485.8 901.2 L491.8 896" fill="none" stroke="#fff" stroke-width="1.6"/><path d="M479 892.4 L485 886.9 L491 892.4 M479 895.2 L485 900.4 L491 895.2" fill="none" stroke="#c4c4c4" stroke-width="1.4"/><rect x="477" y="886.8" width="5" height="1" fill="#c8c8c8"/><rect x="488" y="886.8" width="4.5" height="1" fill="#c8c8c8"/><rect x="477" y="888.0" width="5" height="1" fill="#fff"/><rect x="488" y="888.0" width="4.5" height="1" fill="#fff"/><rect x="477" y="899.8" width="5" height="1" fill="#c8c8c8"/><rect x="488" y="899.8" width="4.5" height="1" fill="#c8c8c8"/><rect x="477" y="901.0" width="5" height="1" fill="#fff"/><rect x="488" y="901.0" width="4.5" height="1" fill="#fff"/><rect x="500" y="888" width="1" height="5" fill="#000"/><rect x="504" y="889" width="2" height="1" fill="#000"/><rect x="504" y="892" width="2" height="1" fill="#000"/><rect x="503" y="890" width="1" height="2" fill="#000"/><rect x="506" y="890" width="1" height="2" fill="#000"/><rect x="510" y="889" width="2" height="1" fill="#000"/><rect x="509" y="890" width="1" height="1" fill="#000"/><rect x="512" y="889" width="1" height="4" fill="#000"/><rect x="510" y="891" width="2" height="1" fill="#000"/><rect x="510" y="893" width="2" height="1" fill="#000"/><rect x="500" y="894" width="2" height="5" fill="#000"/><rect x="504" y="894" width="2" height="1" fill="#000"/><rect x="504" y="896" width="2" height="3" fill="#000"/><rect x="508" y="895" width="4" height="2" fill="#000"/><rect x="508" y="895" width="2" height="4" fill="#000"/><rect x="511" y="896" width="2" height="3" fill="#000"/><path d="M634.5 888 L645.5 899 M645.5 888 L634.5 899" fill="none" stroke="#000" stroke-width="1.5"/><path d="M638.5 670 L642.3 665.5 L646 670 Z" fill="#000"/><path d="M638.5 743.5 L642.3 748 L646 743.5 Z" fill="#000"/><path d="M116 1019.5 L123.5 1019.5 L119.75 1024 Z" fill="#000"/><path d="M405 1020.5 L407.8 1023.5 L412.5 1016.8" fill="none" stroke="#000" stroke-width="2"/><path d="M557.5 1016.2 L564 1016.2 Q567.8 1016.2 567.8 1019.8 Q567.8 1023.5 564 1023.5 L556 1023.5 M559 1020.8 L556 1023.5 L559 1026.5" fill="none" stroke="#000" stroke-width="1.5"/><path d="M588 1016 L582.5 1022 L588 1028" fill="none" stroke="#000" stroke-width="1.5"/><path d="M608 1016 L613.5 1022 L608 1028" fill="none" stroke="#000" stroke-width="1.5"/><path d="M632 1016 L627 1022 L632 1028 M636 1016 L641 1022 L636 1028" fill="none" stroke="#000" stroke-width="1.5"/><path d="M662 66.7 L672.3 71.8 L662 76.9 Z" fill="#0000cc"/><path d="M662 96.7 L672.3 101.8 L662 106.9 Z" fill="#0000cc"/><path d="M662 126.7 L672.3 131.8 L662 136.9 Z" fill="#0000cc"/><path d="M662 156.7 L672.3 161.8 L662 166.9 Z" fill="#0000cc"/><path d="M662 186.7 L672.3 191.8 L662 196.9 Z" fill="#0000cc"/><path d="M662 216.7 L672.3 221.8 L662 226.9 Z" fill="#0000cc"/><path d="M662 246.7 L672.3 251.8 L662 256.9 Z" fill="#0000cc"/><path d="M662 276.7 L672.3 281.8 L662 286.9 Z" fill="#0000cc"/><path d="M662 306.7 L672.3 311.8 L662 316.9 Z" fill="#0000cc"/><path d="M662 336.7 L672.3 341.8 L662 346.9 Z" fill="#0000cc"/><path d="M662 366.7 L672.3 371.8 L662 376.9 Z" fill="#0000cc"/><path d="M1287 468 L1291.3 463 L1295.5 468 Z" fill="#000"/><path d="M1287 975 L1291.3 980 L1295.5 975 Z" fill="#000"/><path d="M1293 1042 L1303 1032 M1297 1042 L1303 1036 M1301 1042 L1303 1040" stroke="#999" stroke-width="1"/></svg>
</body></html>
